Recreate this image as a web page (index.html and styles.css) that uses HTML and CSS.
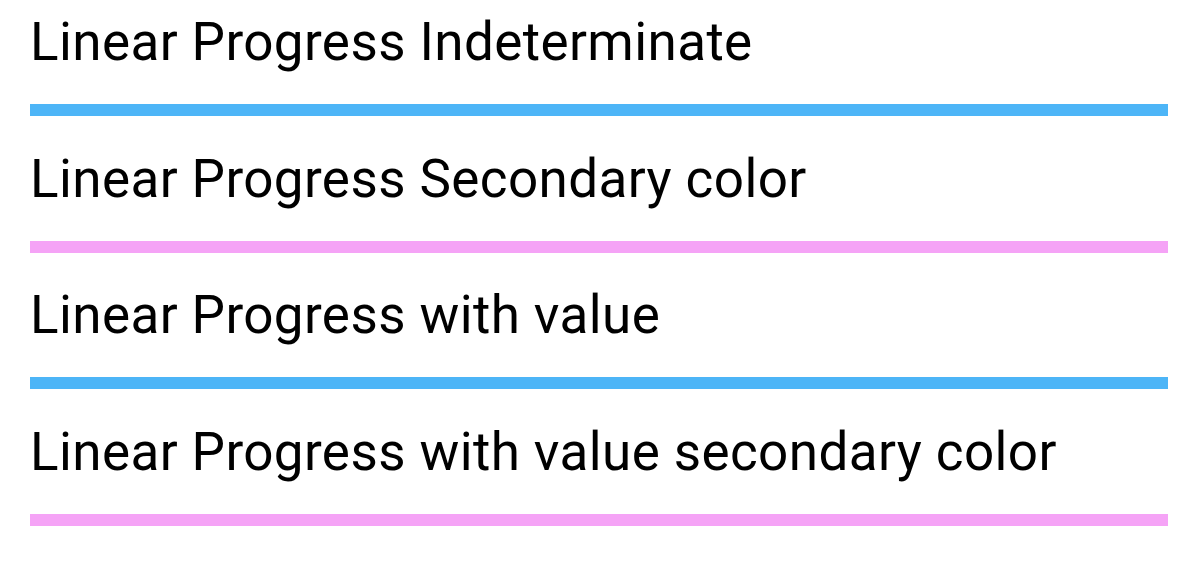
FILE: index.html
```html
<!DOCTYPE html>
<html>
<head>
<meta charset="utf-8">
<link rel="stylesheet" href="styles.css">
</head>
<body>
<div class="demo">
  <div class="item">
    <div class="label">Linear Progress Indeterminate</div>
    <div class="bar bar-primary"></div>
  </div>
  <div class="item">
    <div class="label">Linear Progress Secondary color</div>
    <div class="bar bar-secondary"></div>
  </div>
  <div class="item">
    <div class="label">Linear Progress with value</div>
    <div class="bar bar-primary"></div>
  </div>
  <div class="item">
    <div class="label">Linear Progress with value secondary color</div>
    <div class="bar bar-secondary"></div>
  </div>
</div>
</body>
</html>
```
FILE: styles.css
```css
html, body {
  margin: 0;
  padding: 0;
  background: #ffffff;
}
.demo {
  display: flex;
  flex-direction: column;
  gap: 32.67px;
  padding: 12px 30px 0 30px;
  width: 1138px;
}
.item {
  display: flex;
  flex-direction: column;
  gap: 32px;
}
.label {
  font-family: Roboto, "Open Sans", sans-serif;
  font-size: 53px;
  line-height: 60px;
  letter-spacing: 0.4px;
  color: #000000;
  white-space: nowrap;
}
.bar {
  height: 12px;
  width: 1138px;
}
.bar-primary {
  background: #4db5f7;
}
.bar-secondary {
  background: #f5a3f6;
}
```
